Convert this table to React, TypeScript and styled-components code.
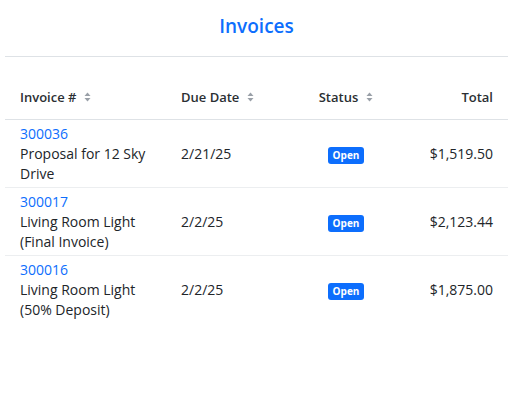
import React from "react";
import styled, { createGlobalStyle } from "styled-components";

const Global = createGlobalStyle`
  html, body { margin: 0; padding: 0; background: #fff; }
  body { font-family: "Open Sans", "Noto Sans", sans-serif; color: #212529; }
`;

const Page = styled.div`
  width: 517px;
  padding: 0 9px 0 5px;
  box-sizing: border-box;
`;

const Title = styled.h1`
  margin: 0;
  height: 57px;
  display: flex;
  align-items: center;
  justify-content: center;
  font-size: 19px;
  font-weight: 600;
  color: #0d6efd;
  border-bottom: 1px solid #dee2e6;
  padding-bottom: 5px;
  box-sizing: border-box;
`;

const Table = styled.div`
  margin-top: 20px;
`;

const Row = styled.div<{ $head?: boolean }>`
  display: grid;
  grid-template-columns: 161px 125px 110px 1fr;
  align-items: center;
  border-bottom: 1px solid ${(p) => (p.$head ? "#dee2e6" : "#eceef0")};
  padding: ${(p) => (p.$head ? "10px 0 12px" : "4px 0 3px")};
  &:last-child { border-bottom: none; }
`;

const Cell = styled.div<{ $align?: "left" | "center" | "right" }>`
  padding: 0 15px;
  font-size: 14px;
  line-height: 20px;
  text-align: ${(p) => p.$align ?? "left"};
`;

const HeadCell = styled(Cell)`
  font-weight: 600;
  font-size: 13px;
  color: #2b2f33;
  display: flex;
  align-items: center;
  gap: 8px;
  justify-content: ${(p) =>
    p.$align === "right" ? "flex-end" : p.$align === "center" ? "center" : "flex-start"};
`;

const Link = styled.a`
  display: block;
  color: #0d6efd;
  text-decoration: none;
`;

const Badge = styled.span`
  display: inline-block;
  background: #0d6efd;
  color: #fff;
  font-size: 10px;
  font-weight: 700;
  line-height: 17px;
  padding: 0 5px;
  border-radius: 3px;
`;

const SortIcon = () => (
  <svg width="7" height="10" viewBox="0 0 7 10" aria-hidden>
    <path d="M3.5 0.5 L6.5 4 H0.5 Z" fill="#9aa0a8" />
    <path d="M3.5 9.5 L6.5 6 H0.5 Z" fill="#9aa0a8" />
  </svg>
);

const rows = [
  { id: "300036", name: "Proposal for 12 Sky Drive", due: "2/21/25", total: "$1,519.50" },
  { id: "300017", name: "Living Room Light (Final Invoice)", due: "2/2/25", total: "$2,123.44" },
  { id: "300016", name: "Living Room Light (50% Deposit)", due: "2/2/25", total: "$1,875.00" },
];

export default function App() {
  return (
    <Page>
      <Global />
      <Title>Invoices</Title>
      <Table>
        <Row $head>
          <HeadCell>Invoice # <SortIcon /></HeadCell>
          <HeadCell>Due Date <SortIcon /></HeadCell>
          <HeadCell $align="center">Status <SortIcon /></HeadCell>
          <HeadCell $align="right">Total</HeadCell>
        </Row>
        {rows.map((r) => (
          <Row key={r.id}>
            <Cell>
              <Link href="#">{r.id}</Link>
              {r.name}
            </Cell>
            <Cell>{r.due}</Cell>
            <Cell $align="center"><Badge>Open</Badge></Cell>
            <Cell $align="right">{r.total}</Cell>
          </Row>
        ))}
      </Table>
    </Page>
  );
}
